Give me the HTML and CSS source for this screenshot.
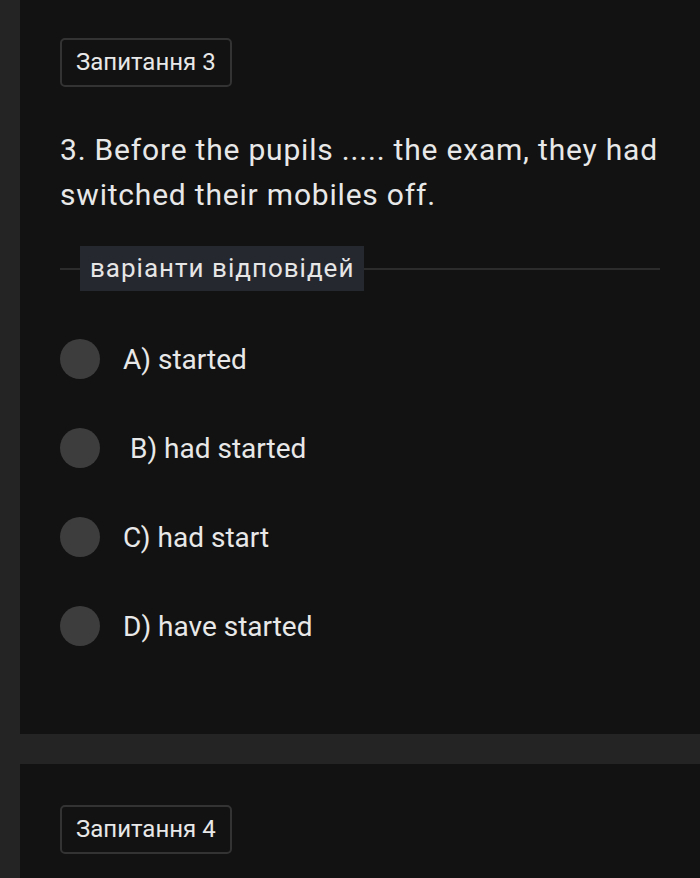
FILE: index.html
```html
<!DOCTYPE html>
<html lang="uk">
  <head>
    <meta charset="utf-8">
    <meta name="viewport" content="width=device-width, initial-scale=1.0">
    <title>Запитання</title>
    <link rel="stylesheet" href="styles.css">
  </head>
  <body>

    <!-- Question 3 -->
    <div class="card">
      <div class="badge">Запитання 3</div>

      <p class="question">3. Before the pupils ..... the exam, they had switched their mobiles off.</p>

      <div class="divider">
        <span class="divider-label">варіанти відповідей</span>
      </div>

      <div class="options">
        <div class="option"><span class="radio"></span><span class="option-text">A) started</span></div>
        <div class="option"><span class="radio"></span><span class="option-text">&nbsp;B) had started</span></div>
        <div class="option"><span class="radio"></span><span class="option-text">C) had start</span></div>
        <div class="option"><span class="radio"></span><span class="option-text">D) have started</span></div>
      </div>
    </div>

    <!-- Question 4 -->
    <div class="card">
      <div class="badge">Запитання 4</div>
    </div>

  </body>
</html>
```

FILE: styles.css
```css
body {
  margin: 0;
  padding: 0 0 0 20px;
  background-color: #242424;
  font-family: Roboto, "Noto Sans", sans-serif;
  color: #e6e6e6;
  display: flex;
  flex-direction: column;
  gap: 30px;
}

.card {
  background-color: #121212;
  padding: 38px 40px 88px 40px;
}

.card:last-child {
  padding-top: 41px;
  min-height: 200px;
}

.badge {
  display: inline-block;
  border: 2px solid #333333;
  border-radius: 5px;
  padding: 10px 14px;
  font-size: 24px;
  line-height: 25px;
  color: #e8e8e8;
}

.question {
  margin: 40px 0 0 0;
  font-size: 30px;
  line-height: 45px;
  letter-spacing: 0.8px;
  color: #e8e8e8;
}

.divider {
  margin-top: 29px;
  display: flex;
  align-items: center;
  width: 600px;
}

.divider::before,
.divider::after {
  content: "";
  height: 2px;
  background-color: #2c2c2c;
}

.divider::before {
  width: 20px;
}

.divider::after {
  flex: 1;
}

.divider-label {
  background-color: #262830;
  padding: 0 10px;
  font-size: 26px;
  line-height: 45px;
  letter-spacing: 1px;
  color: #e6e6e6;
}

.options {
  margin-top: 48px;
  display: flex;
  flex-direction: column;
  gap: 49px;
}

.option {
  display: flex;
  align-items: center;
  gap: 23px;
  height: 40px;
}

.radio {
  width: 40px;
  height: 40px;
  border-radius: 50%;
  background-color: #3d3d3d;
}

.option-text {
  font-size: 28px;
  color: #e8e8e8;
}
```
